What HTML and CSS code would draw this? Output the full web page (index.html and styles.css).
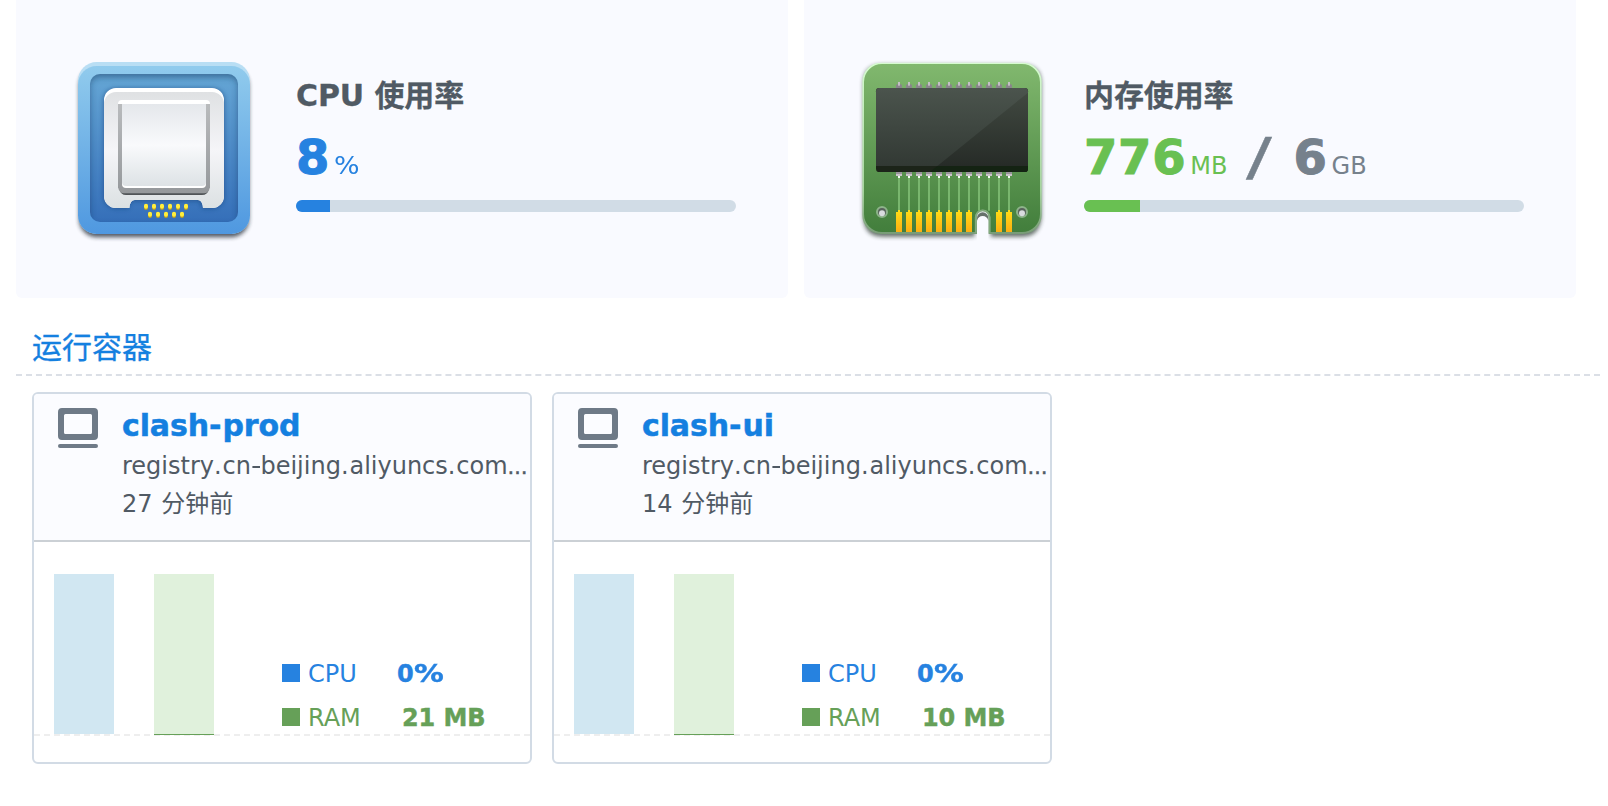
FILE: index.html
```html
<!DOCTYPE html>
<html lang="zh-CN">
<head>
<meta charset="utf-8">
<title>Docker</title>
<link rel="stylesheet" href="styles.css">
</head>
<body>
<main class="page">
  <section class="stats">
    <article class="stat">
      <svg class="stat-icon" viewBox="0 0 630 600">
        <defs>
          <linearGradient id="frame" x2="0" y2="1"><stop offset="0" stop-color="#91cbed"/><stop offset="1" stop-color="#4f98e0"/></linearGradient>
          <linearGradient id="well" x2="0" y2="1"><stop offset="0" stop-color="#65a6d5"/><stop offset="1" stop-color="#356fb9"/></linearGradient>
          <linearGradient id="metal" x2="0" y2="1"><stop offset="0" stop-color="#dfe1e3"/><stop offset=".5" stop-color="#f5f5f8"/><stop offset="1" stop-color="#dce1e3"/></linearGradient>
          <linearGradient id="face" x2="0" y2="1"><stop offset="0" stop-color="#e4e7eb"/><stop offset=".5" stop-color="#f9fafc"/><stop offset="1" stop-color="#dde2e5"/></linearGradient>
          <linearGradient id="rim" x2="0" y2="1"><stop offset="0" stop-color="#b9bbbd"/><stop offset="1" stop-color="#95989b"/></linearGradient>
          <clipPath id="wellClip"><rect x="90" y="72" width="444" height="444" rx="30"/></clipPath>
          <filter id="blur" x="-20%" y="-20%" width="140%" height="140%"><feGaussianBlur stdDeviation="10"/></filter>
          <filter id="blurS" x="-20%" y="-20%" width="140%" height="140%"><feGaussianBlur stdDeviation="6"/></filter>
        </defs>
        <rect x="57" y="52" width="510" height="510" rx="54" fill="#1d2733" opacity=".75" filter="url(#blurS)"/>
        <rect x="54" y="36" width="516" height="516" rx="56" fill="#b9def4"/>
        <path d="M54 104a56 56 0 0 1 56-56H514a56 56 0 0 1 56 56V496a56 56 0 0 1-56 56H110a56 56 0 0 1-56-56Z" fill="url(#frame)"/>
        <rect x="90" y="72" width="444" height="444" rx="30" fill="url(#well)"/>
        <g clip-path="url(#wellClip)">
          <path d="M60 40H564V546H60ZM90 86V506a20 20 0 0 0 20 20H514a20 20 0 0 0 20-20V108a26 26 0 0 0-26-26H116a26 26 0 0 0-26 26Z" fill="#12395f" fill-rule="evenodd" opacity=".5" filter="url(#blur)"/>
          <path d="M130 150a36 36 0 0 1 36-36H458a36 36 0 0 1 36 36V438a38 38 0 0 1-38 38H428l-10-22H214l-10 22H168a38 38 0 0 1-38-38Z" fill="#133c74" opacity=".5" filter="url(#blurS)"/>
        </g>
        <path d="M132 150a36 36 0 0 1 36-36H456a36 36 0 0 1 36 36V438a36 36 0 0 1-36 36H429Q427 450 414 450H224Q210 450 208 474H168a36 36 0 0 1-36-36Z" fill="#fff"/>
        <path d="M132 162a36 36 0 0 1 36-36H456a36 36 0 0 1 36 36V438a36 36 0 0 1-36 36H429Q427 450 414 450H224Q210 450 208 474H168a36 36 0 0 1-36-36Z" fill="url(#metal)"/>
        <path d="M178 416Q182 435 198 435H426Q443 435 447 416Z" fill="#505457"/>
        <rect x="174" y="150" width="276" height="30" rx="12" fill="#fff"/>
        <path d="M174 162H450V412Q446 430 432 430H192Q178 430 174 412Z" fill="url(#rim)"/>
        <path d="M186 162H438V402a12 12 0 0 1-12 12H198a12 12 0 0 1-12-12Z" fill="#fff"/>
        <path d="M186 162H438V396a12 12 0 0 1-12 12H198a12 12 0 0 1-12-12Z" fill="url(#face)"/>
        <g stroke="#bd9f21" stroke-width="12" stroke-linecap="round"><path d="M258 468v6m24-6v6m24-6v6m24-6v6m24-6v6m24-6v6M270 492v6m24-6v6m24-6v6m24-6v6m24-6v6"/></g>
        <g stroke="#ffef3d" stroke-width="12" stroke-linecap="round"><path d="M258 467v3m24-3v3m24-3v3m24-3v3m24-3v3m24-3v3M270 491v3m24-3v3m24-3v3m24-3v3m24-3v3"/></g>
      </svg>
      <div class="stat-info">
        <h2 class="stat-title">CPU 使用率</h2>
        <p class="reading blue"><b>8</b><span class="unit percent">%</span></p>
        <div class="track"><div class="fill fill-blue" style="width:34px"></div></div>
      </div>
    </article>
    <article class="stat">
      <svg class="stat-icon" viewBox="-6 0 630 600">
        <defs>
          <linearGradient id="board" x2="0" y2="1"><stop offset="0" stop-color="#81b86e"/><stop offset="1" stop-color="#427e3c"/></linearGradient>
          <linearGradient id="edge" x2="0" y2="1"><stop offset="0" stop-color="#d6fbd0"/><stop offset=".75" stop-color="#a5d49d"/><stop offset="1" stop-color="#789b77"/></linearGradient>
          <linearGradient id="chip" x2="0" y2="1"><stop offset="0" stop-color="#4b544d"/><stop offset="1" stop-color="#323934"/></linearGradient>
          <linearGradient id="shade" x2="0" y2="1"><stop offset="0" stop-color="#414941"/><stop offset="1" stop-color="#262b27"/></linearGradient>
          <linearGradient id="gold" x2="0" y2="1"><stop offset="0" stop-color="#ffde16"/><stop offset="1" stop-color="#fcae12"/></linearGradient>
          <g id="pinTop"><path d="M-9 114V106l4-4H5l4 4v8Z" fill="#8a858c"/><rect x="-3" y="96" width="6" height="11" fill="#c3bec4"/></g>
          <g id="pinBottom"><path d="M-9 366H9V378H3V384H-3V378H-9Z" fill="#98939a"/><rect x="-9" y="372" width="18" height="6" fill="#c9c2c9"/><rect x="-3" y="378" width="6" height="6" fill="#f3fff0"/></g>
          <path id="trace" d="M0 384V482" stroke="#79b66e" stroke-width="6"/>
          <path id="contact" d="M-9 486H-3V480H3V486H9V546H-9Z" fill="url(#gold)"/>
        </defs>
        <path d="M40 100Q40 44 96 44H518Q574 44 574 100V504Q568 560 518 560H422V500a24 24 0 0 0-48 0V560H96Q44 560 40 504Z" fill="#26352b" opacity=".7" filter="url(#blurS)"/>
        <path d="M37 94a56 56 0 0 1 56-56H519a56 56 0 0 1 56 56V496a56 56 0 0 1-56 56H415V500a17 17 0 0 0-34 0V552H93a56 56 0 0 1-56-56Z" fill="url(#edge)"/>
        <path d="M42 96a54 54 0 0 1 54-54H516a54 54 0 0 1 54 54V492a54 54 0 0 1-54 54H421V502a23 23 0 0 0-46 0V546H96a54 54 0 0 1-54-54Z" fill="url(#board)"/>
        <path d="M381 570V504a17 17 0 0 1 34 0V570Z" fill="#f9faff"/>
        <path d="M381 512V504a17 17 0 0 1 34 0v8q-4-14-17-14t-17 14Z" fill="#66716b"/>
        <path d="M377 550V502a21 21 0 0 1 42 0V550" fill="none" stroke="#82aa7d" stroke-width="5"/>
        <use href="#pinTop" x="147"/><use href="#pinTop" x="177"/><use href="#pinTop" x="207"/><use href="#pinTop" x="237"/><use href="#pinTop" x="267"/><use href="#pinTop" x="297"/><use href="#pinTop" x="327"/><use href="#pinTop" x="357"/><use href="#pinTop" x="387"/><use href="#pinTop" x="417"/><use href="#pinTop" x="447"/><use href="#pinTop" x="477"/>
        <rect x="78" y="114" width="456" height="252" rx="10" fill="#1c2419"/>
        <path d="M78 348V124a10 10 0 0 1 10-10H524a10 10 0 0 1 10 10V348Z" fill="url(#chip)"/>
        <path d="M534 128V348H262Z" fill="url(#shade)"/>
        <path d="M240 366 262 348H534V356q0 10-10 10Z" fill="#142313"/>
        <use href="#trace" x="147"/><use href="#trace" x="177"/><use href="#trace" x="207"/><use href="#trace" x="237"/><use href="#trace" x="267"/><use href="#trace" x="297"/><use href="#trace" x="327"/><use href="#trace" x="357"/><use href="#trace" x="387"/><use href="#trace" x="417"/><use href="#trace" x="447"/><use href="#trace" x="477"/>
        <use href="#pinBottom" x="147"/><use href="#pinBottom" x="177"/><use href="#pinBottom" x="207"/><use href="#pinBottom" x="237"/><use href="#pinBottom" x="267"/><use href="#pinBottom" x="297"/><use href="#pinBottom" x="327"/><use href="#pinBottom" x="357"/><use href="#pinBottom" x="387"/><use href="#pinBottom" x="417"/><use href="#pinBottom" x="447"/><use href="#pinBottom" x="477"/>
        <use href="#contact" x="147"/><use href="#contact" x="177"/><use href="#contact" x="207"/><use href="#contact" x="237"/><use href="#contact" x="267"/><use href="#contact" x="297"/><use href="#contact" x="327"/><use href="#contact" x="357"/><use href="#contact" x="447"/><use href="#contact" x="477"/>
        <g stroke="#8db38a" stroke-width="6"><circle cx="96" cy="486" r="15" fill="#59635c"/><circle cx="516" cy="486" r="15" fill="#59635c"/></g>
        <g fill="#d9dcde"><circle cx="96" cy="490" r="9"/><circle cx="516" cy="490" r="9"/></g>
      </svg>
      <div class="stat-info">
        <h2 class="stat-title">内存使用率</h2>
        <p class="reading green"><b>776</b><span class="unit">MB</span><span class="total"><b class="slash">/</b><b>6</b><span class="unit">GB</span></span></p>
        <div class="track"><div class="fill fill-green" style="width:56px"></div></div>
      </div>
    </article>
  </section>

  <h1 class="section-title">运行容器</h1>

  <section class="containers">
    <article class="box">
      <header class="box-head">
        <svg class="box-icon" viewBox="0 0 40 40"><path fill="#6e7a87" fill-rule="evenodd" d="M4 0H36a4 4 0 0 1 4 4V28a4 4 0 0 1-4 4H4a4 4 0 0 1-4-4V4a4 4 0 0 1 4-4ZM7.500 6A1.500 1.500 0 0 0 6 7.500V24.500A1.500 1.500 0 0 0 7.500 26H32.500A1.500 1.500 0 0 0 34 24.500V7.500A1.500 1.500 0 0 0 32.500 6Z"/><rect y="36" width="40" height="4" rx="2" fill="#6e7a87"/></svg>
        <div class="box-text">
          <h3 class="name">clash<span class="hy">-</span>prod</h3>
          <p class="line image">registry<span class="dot">.</span>cn<span class="dash">-</span>beijing<span class="dot">.</span>aliyuncs<span class="dot">.</span>com<span class="more">…</span></p>
          <p class="line">27 分钟前</p>
        </div>
      </header>
      <div class="chart">
        <div class="plot">
          <div class="bar bar-cpu"></div>
          <div class="bar bar-ram"></div>
          <div class="legend">
            <div class="row blue"><i class="swatch fill-blue"></i><span class="key">CPU</span><b>0<span class="pct">%</span></b></div>
            <div class="row ram"><i class="swatch fill-ram"></i><span class="key">RAM</span><b>21 MB</b></div>
          </div>
        </div>
      </div>
    </article>
    <article class="box">
      <header class="box-head">
        <svg class="box-icon" viewBox="0 0 40 40"><path fill="#6e7a87" fill-rule="evenodd" d="M4 0H36a4 4 0 0 1 4 4V28a4 4 0 0 1-4 4H4a4 4 0 0 1-4-4V4a4 4 0 0 1 4-4ZM7.500 6A1.500 1.500 0 0 0 6 7.500V24.500A1.500 1.500 0 0 0 7.500 26H32.500A1.500 1.500 0 0 0 34 24.500V7.500A1.500 1.500 0 0 0 32.500 6Z"/><rect y="36" width="40" height="4" rx="2" fill="#6e7a87"/></svg>
        <div class="box-text">
          <h3 class="name">clash<span class="hy">-</span>ui</h3>
          <p class="line image">registry<span class="dot">.</span>cn<span class="dash">-</span>beijing<span class="dot">.</span>aliyuncs<span class="dot">.</span>com<span class="more">…</span></p>
          <p class="line">14 分钟前</p>
        </div>
      </header>
      <div class="chart">
        <div class="plot">
          <div class="bar bar-cpu"></div>
          <div class="bar bar-ram"></div>
          <div class="legend">
            <div class="row blue"><i class="swatch fill-blue"></i><span class="key">CPU</span><b>0<span class="pct">%</span></b></div>
            <div class="row ram"><i class="swatch fill-ram"></i><span class="key">RAM</span><b>10 MB</b></div>
          </div>
        </div>
      </div>
    </article>
  </section>
</main>
</body>
</html>
```

FILE: styles.css
```css
* { box-sizing: border-box; margin: 0; padding: 0; }
body {
  background: #fff;
  color: #505a64;
  font-family: Verdana, "DejaVu Sans", "Noto Sans CJK SC", sans-serif;
  font-size: 24px;
  overflow: hidden;
}
.page { width: 1608px; height: 806px; padding-left: 16px; }
.blue { color: #2682e0; }
.green { color: #69c052; }
.fill-blue { background: #2682e0; }
.fill-green { background: #69c052; }
.fill-ram { background: #66a058; }

.stats { display: flex; gap: 16px; }
.stat {
  display: flex;
  gap: 26px;
  width: 772px;
  height: 298px;
  padding: 50px 0 0 44px;
  background: #f9faff;
  border-radius: 0 0 6px 6px;
}
.stat-icon { width: 210px; height: 200px; flex: none; }
.stat-info { width: 440px; padding-top: 26px; }
.stat-title { font-size: 30px; line-height: 40px; height: 40px; letter-spacing: -.1px; white-space: nowrap; -webkit-text-stroke: .3px currentColor; }
.reading { display: flex; align-items: baseline; height: 60px; margin-top: 11px; line-height: 60px; white-space: nowrap; }
.reading b { font-size: 48px; letter-spacing: .7px; -webkit-text-stroke: 1px currentColor; }
.unit { margin-left: 4px; font-size: 24px; }
.percent { display: inline-block; transform: scaleX(1.12); transform-origin: 0 50%; }
.total { display: flex; align-items: baseline; margin-left: 19px; color: #76818c; }
.total .slash { width: 47px; font-weight: 400; transform: scale(1.6, 1.08); transform-origin: 0 50%; -webkit-text-stroke: .3px currentColor; }
.track { height: 12px; margin-top: 13px; border-radius: 6px; background: #d1dce6; overflow: hidden; }
.fill { height: 12px; }

.section-title {
  width: 1584px;
  height: 78px;
  padding: 28px 0 0 16px;
  border-bottom: 2px dashed #dbdfe6;
  color: #1480e0;
  font-size: 30px;
  font-weight: 400;
  line-height: 44px;
  -webkit-text-stroke: .3px currentColor;
}
.containers { display: flex; gap: 20px; padding: 16px 0 0 16px; }
.box { width: 500px; height: 372px; border: 2px solid #d2dbe5; border-radius: 6px; overflow: hidden; }
.box-head { display: flex; gap: 24px; height: 148px; padding: 14px 0 0 24px; background: #fbfcff; border-bottom: 2px solid #cbd0d5; }
.box-icon { width: 40px; height: 40px; flex: none; }
.box-text { white-space: nowrap; }
.name { color: #1480e0; font-size: 30px; line-height: 36px; height: 36px; letter-spacing: -.1px; -webkit-text-stroke: .5px currentColor; }
.line { height: 38px; line-height: 38px; word-spacing: 1px; }
.image { margin-top: 3px; }
.hy { letter-spacing: 1px; }
.dot { letter-spacing: .9px; }
.dash { display: inline-block; width: 9.500px; transform: scaleX(1.2); transform-origin: 0 50%; }
.more { font-size: 20px; -webkit-text-stroke: .5px currentColor; }

.chart { padding-top: 32px; }
.plot {
  display: flex;
  gap: 40px;
  height: 162px;
  padding-left: 20px;
  background: repeating-linear-gradient(90deg, #eee 0 6px, transparent 6px 10px) 0 160px / 100% 2px no-repeat;
}
.bar { width: 60px; height: 160px; }
.bar-cpu { background: #d1e7f2; }
.bar-ram { height: 161px; background: #e0f1dc; border-bottom: 1px solid #66a058; }
.legend { display: flex; flex-direction: column; gap: 14px; margin-left: 28px; padding-top: 84px; }
.row { display: flex; align-items: center; height: 30px; white-space: nowrap; }
.row b { width: 110px; padding-top: 2px; -webkit-text-stroke: .4px currentColor; }
.ram { color: #66a058; }
.ram b { padding-left: 5px; letter-spacing: -.1px; }
.swatch { width: 18px; height: 18px; margin-right: 8px; }
.key { width: 89px; padding-top: 2px; }
.pct { display: inline-block; transform: scaleX(1.24); transform-origin: 0 50%; }
```
